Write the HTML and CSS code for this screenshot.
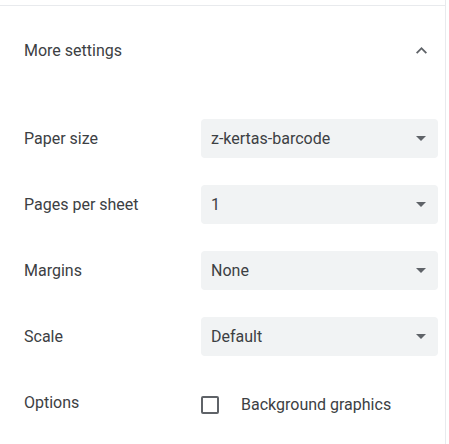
FILE: index.html
```html
<!DOCTYPE html>
<html>
<head>
<meta charset="utf-8">
<link rel="stylesheet" href="styles.css">
</head>
<body>
<div class="panel">
  <div class="header">
    <span class="title">More settings</span>
    <svg class="chevron" width="11" height="7" viewBox="0 0 11 7"><path d="M1.3 6.8 5.5 2.6l4.2 4.2L11 5.5 5.5 0 0 5.5z" fill="#5f6368"/></svg>
  </div>
  <div class="rows">
    <div class="row">
      <div class="label">Paper size</div>
      <div class="select"><span>z-kertas-barcode</span><span class="arrow"></span></div>
    </div>
    <div class="row">
      <div class="label">Pages per sheet</div>
      <div class="select"><span>1</span><span class="arrow"></span></div>
    </div>
    <div class="row">
      <div class="label">Margins</div>
      <div class="select"><span>None</span><span class="arrow"></span></div>
    </div>
    <div class="row">
      <div class="label">Scale</div>
      <div class="select"><span>Default</span><span class="arrow"></span></div>
    </div>
    <div class="row">
      <div class="label">Options</div>
      <div class="option"><span class="checkbox"></span><span>Background graphics</span></div>
    </div>
  </div>
</div>
</body>
</html>
```
FILE: styles.css
```css
html, body {
  margin: 0;
  padding: 0;
  background: #fff;
}
body {
  font-family: Roboto, "Noto Sans", sans-serif;
  font-size: 16px;
  color: #3c4043;
}
.panel {
  width: 446px;
  height: 444px;
  box-sizing: border-box;
  border-right: 1px solid #e8eaed;
  padding-top: 5px;
}
.header {
  border-top: 1px solid #e8eaed;
  height: 88px;
  display: flex;
  align-items: center;
  justify-content: space-between;
  padding: 0 18px 0 24px;
}
.chevron {
  display: block;
}
.rows {
  display: flex;
  flex-direction: column;
  gap: 27px;
  padding-top: 25px;
}
.row {
  display: flex;
  align-items: center;
  height: 39px;
  padding-left: 24px;
}
.label {
  width: 177px;
}
.select {
  width: 237px;
  height: 39px;
  box-sizing: border-box;
  background: #f1f3f4;
  border-radius: 4px;
  display: flex;
  align-items: center;
  justify-content: space-between;
  padding: 0 12px 0 10px;
}
.arrow {
  width: 0;
  height: 0;
  border-left: 5px solid transparent;
  border-right: 5px solid transparent;
  border-top: 5px solid #5f6368;
}
.option {
  display: flex;
  align-items: center;
  margin-top: 4px;
}
.checkbox {
  width: 14px;
  height: 14px;
  border: 2px solid #5f6368;
  border-radius: 2px;
  margin-right: 22px;
}
```
